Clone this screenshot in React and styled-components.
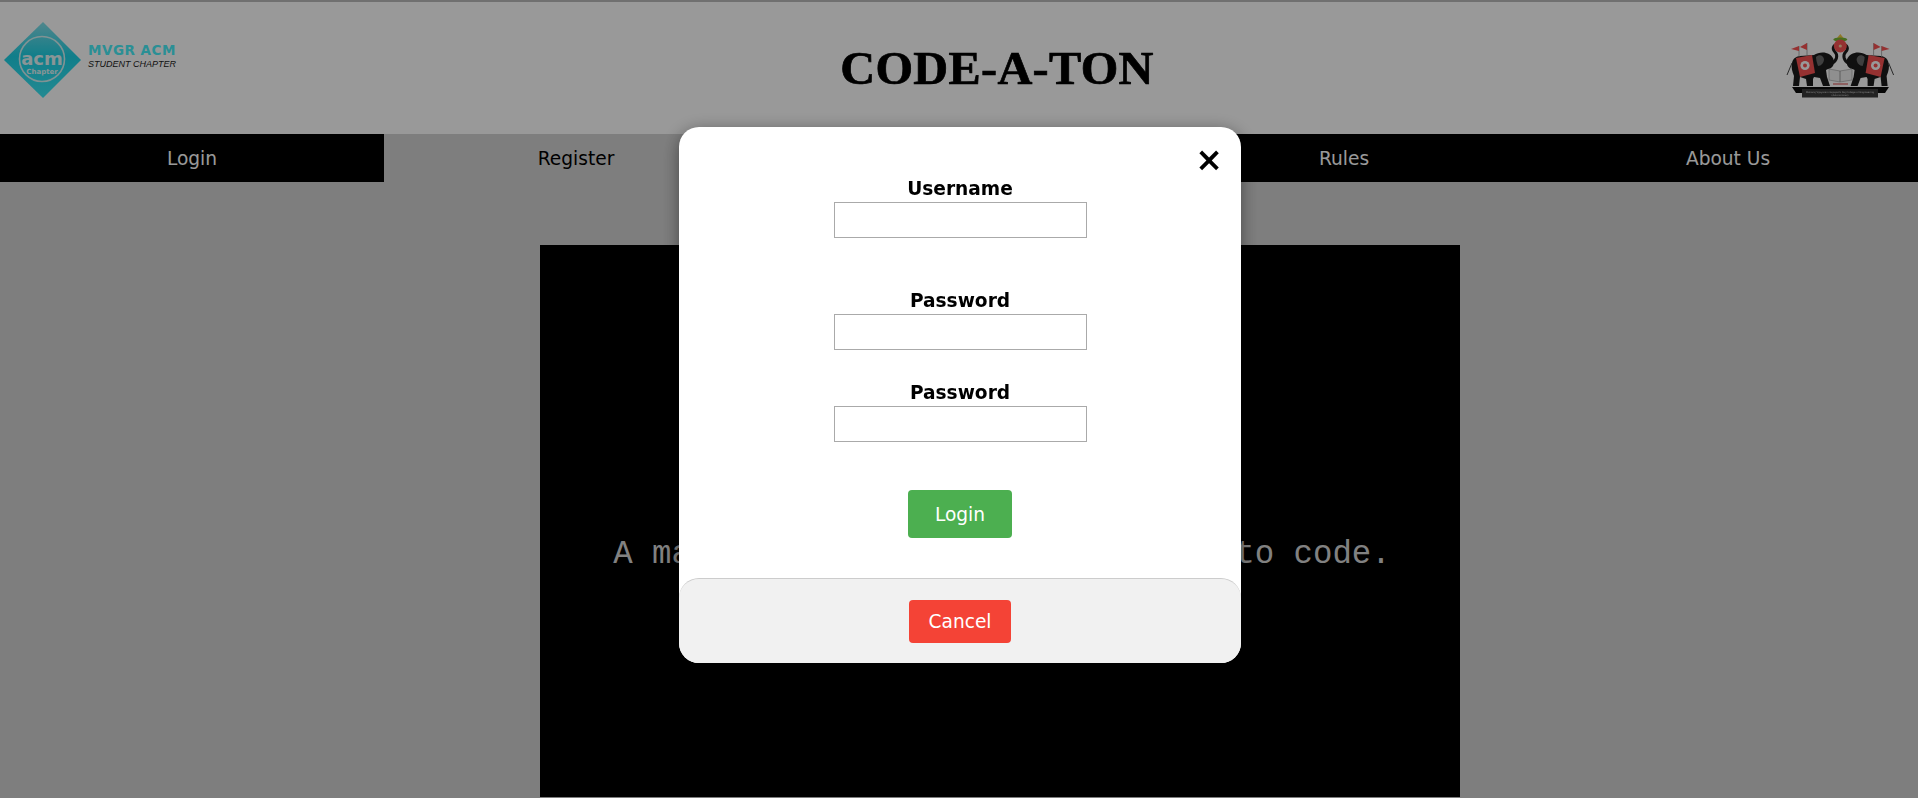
import React from "react";
import styled, { createGlobalStyle } from "styled-components";

const GlobalStyle = createGlobalStyle`
  html, body {
    margin: 0;
    padding: 0;
    height: 100%;
    overflow: hidden;
    background: lightgray;
    font-family: "DejaVu Sans", Verdana, sans-serif;
  }
`;

const Page = styled.div`
  height: 798px;
  display: flex;
  flex-direction: column;
  overflow: hidden;
  background: lightgray;
`;

const Header = styled.header`
  height: 132px;
  flex: none;
  display: grid;
  grid-template-columns: 208px 1fr 132px;
  border-top: 2px solid #bbb;
  background: #fff;
`;

const LeftLogo = styled.div`
  display: flex;
  align-items: flex-start;
  padding: 19px 0 0 4px;
  gap: 6px;
`;

const LogoText = styled.div`
  display: flex;
  flex-direction: column;
  padding-top: 22px;
`;

const LogoName = styled.span`
  font: bold 13.5px/14px "DejaVu Sans", sans-serif;
  letter-spacing: 0.5px;
  color: #46eef8;
  white-space: nowrap;
`;

const LogoSub = styled.span`
  font: italic 9px/14px "Liberation Sans", sans-serif;
  color: #222;
  white-space: nowrap;
`;

const Title = styled.h1`
  margin: 0;
  align-self: center;
  text-align: center;
  font: bold 46px "Liberation Serif", serif;
  letter-spacing: 0.3px;
  -webkit-text-stroke: 0.7px #000;
  transform: scaleX(1.05);
  color: #000;
`;

const RightLogo = styled.div`
  padding-top: 31px;
`;

const Nav = styled.nav`
  height: 48px;
  flex: none;
  display: grid;
  grid-template-columns: repeat(5, 384px);
  background: #000;
`;

const NavItem = styled.a`
  display: flex;
  align-items: center;
  justify-content: center;
  font-size: 18.6px;
  color: ${(p) => (p.$active ? "#000" : "#fff")};
  background: ${(p) => (p.$active ? "lightgray" : "#000")};
`;

const Main = styled.main`
  flex: 1;
  display: flex;
  padding: 63px 0 1px 540px;
`;

const Stage = styled.section`
  width: 920px;
  display: flex;
  align-items: center;
  justify-content: center;
  padding: 67px 0 0 4px;
  box-sizing: border-box;
  background: #000;
`;

const Tagline = styled.p`
  margin: 0;
  font: 32.4px "Liberation Mono", monospace;
  color: #d8d8d8;
  white-space: nowrap;
`;

const Overlay = styled.div`
  position: fixed;
  inset: 0;
  background: rgba(0, 0, 0, 0.4);
`;

const Modal = styled.div`
  position: absolute;
  left: 679px;
  top: 127px;
  width: 562px;
  height: 536px;
  display: flex;
  flex-direction: column;
  border-radius: 20px;
  background: #fff;
  box-shadow: 0 4px 18px rgba(0, 0, 0, 0.45);
`;

const Close = styled.span`
  position: absolute;
  top: 8px;
  right: 18px;
  font: bold 33px/50px "DejaVu Sans", sans-serif;
  color: #000;
`;

const Form = styled.form`
  flex: 1;
  display: flex;
  flex-direction: column;
  align-items: center;
  padding-top: 49px;
`;

const Field = styled.div`
  display: flex;
  flex-direction: column;
  align-items: center;
  margin-bottom: ${(p) => p.$gap}px;
`;

const Label = styled.label`
  font: bold 18.6px/26px "DejaVu Sans", sans-serif;
  color: #000;
`;

const Input = styled.input`
  box-sizing: border-box;
  width: 253px;
  height: 36px;
  border: 1px solid #aaa;
  padding: 0 8px;
  background: #fff;
`;

const Button = styled.button`
  box-sizing: border-box;
  border: none;
  border-radius: 4px;
  color: #fff;
  font: 18.6px "DejaVu Sans", sans-serif;
  background: ${(p) => p.$color};
  width: ${(p) => p.$w}px;
  height: ${(p) => p.$h}px;
`;

const Footer = styled.div`
  box-sizing: border-box;
  height: 85px;
  flex: none;
  display: flex;
  align-items: center;
  justify-content: center;
  border-top: 1px solid #ccc;
  border-radius: 20px;
  background: #f1f1f1;
`;

function AcmLogo() {
  return (
    <svg width="78" height="78" viewBox="0 0 78 78">
      <defs>
        <linearGradient id="acmFill" x1="0" y1="0" x2="0" y2="1">
          <stop offset="0" stopColor="#86e0ea" />
          <stop offset="0.45" stopColor="#1cd2e6" />
          <stop offset="1" stopColor="#3ce6f4" />
        </linearGradient>
      </defs>
      <polygon points="39,1 77,39 39,77 0,39" fill="url(#acmFill)" />
      <circle cx="38" cy="38" r="22.5" fill="none" stroke="#d6f4f6" strokeWidth="1.6" />
      <text x="38" y="44" textAnchor="middle" fontFamily="DejaVu Sans, sans-serif" fontWeight="bold" fontSize="18" fill="#e4f8fa">acm</text>
      <text x="38" y="53" textAnchor="middle" fontFamily="DejaVu Sans, sans-serif" fontWeight="bold" fontSize="7" fill="#e4f8fa">Chapter</text>
    </svg>
  );
}

function Elephant() {
  return (
    <g>
      <path d="M6 30 C7 25 11 23 14 23 L28 22 C31 20 36 19 40 20 C45 21 48 25 48 29 C48 33 45 36 42 36 L40 37 L41 44 L44 53 L37 53 L34 45 L28 44 L27 46 L27 53 L21 53 L20 46 L14 44 L13 53 L7 53 L8 43 C6 38 5 34 6 30 Z" fill="#1c1c1c" />
      <path d="M46 30 C51 28 52 22 49 19 C46 16 47 12 51 12" fill="none" stroke="#1c1c1c" strokeWidth="3" strokeLinecap="round" />
      <path d="M6 30 L1 42" stroke="#444" strokeWidth="1" />
      <path d="M10 25 L26 22 L29 40 L14 44 Z" fill="#f95252" />
      <circle cx="19" cy="32.5" r="4.6" fill="#fff" />
      <circle cx="19" cy="32.5" r="2" fill="#f95252" />
      <path d="M30 24 C33 21 37 22 38 26 C38 30 35 33 32 33 C31 30 30 27 30 24 Z" fill="#6a6a6a" />
      <path d="M13 24 L13 13 M21 22 L21 10" stroke="#999" strokeWidth="0.8" />
      <polygon points="13,13 13,18 5,16" fill="#f95252" />
      <polygon points="21,10 21,17 14,14" fill="#f95252" />
    </g>
  );
}

function CollegeCrest() {
  return (
    <svg width="110" height="68" viewBox="0 0 110 68">
      <defs>
        <filter id="crestBlur">
          <feGaussianBlur stdDeviation="0.3" />
        </filter>
      </defs>
      <g filter="url(#crestBlur)">
        <Elephant />
        <g transform="translate(108.6 0) scale(-1 1)">
          <Elephant />
        </g>
        <polygon points="54.3,1 51,5 57.6,5" fill="#f0c840" />
        <ellipse cx="54.3" cy="6.5" rx="7" ry="2" fill="#78b834" />
        <circle cx="54.3" cy="13" r="6.5" fill="#f95252" />
        <circle cx="54.3" cy="13" r="1.6" fill="#f5d0a0" />
        <path d="M43 36 L54 38 L66 36 L66 47 L54 49 L43 47 Z" fill="#eee" stroke="#999" strokeWidth="0.6" />
        <path d="M54 38 V49" stroke="#888" strokeWidth="0.8" />
        <path d="M47 51 H62" stroke="#e06060" strokeWidth="1.2" />
        <path d="M6 54 H103 L99 60 H10 Z" fill="#111" />
        <rect x="16" y="56" width="76" height="8.5" fill="#3a3a3a" />
        <text x="54" y="59.6" textAnchor="middle" fontFamily="DejaVu Sans, sans-serif" fontSize="2.4" textLength="68" fill="#ddd">Maharaj Vijayaram Gajapathi Raj College of Engineering</text>
        <text x="54" y="63" textAnchor="middle" fontFamily="DejaVu Sans, sans-serif" fontSize="2.4" fill="#ddd">(Autonomous)</text>
      </g>
    </svg>
  );
}

const navItems = ["Login", "Register", "Home", "Rules", "About Us"];

export default function App() {
  return (
    <Page>
      <GlobalStyle />
      <Header>
        <LeftLogo>
          <AcmLogo />
          <LogoText>
            <LogoName>MVGR ACM</LogoName>
            <LogoSub>STUDENT CHAPTER</LogoSub>
          </LogoText>
        </LeftLogo>
        <Title>CODE-A-TON</Title>
        <RightLogo>
          <CollegeCrest />
        </RightLogo>
      </Header>
      <Nav>
        {navItems.map((item) => (
          <NavItem key={item} $active={item === "Register"}>
            {item}
          </NavItem>
        ))}
      </Nav>
      <Main>
        <Stage>
          <Tagline>A marathon for anyone who loves to code.</Tagline>
        </Stage>
      </Main>
      <Overlay>
        <Modal>
          <Close>×</Close>
          <Form>
            <Field $gap={50}>
              <Label>Username</Label>
              <Input type="text" />
            </Field>
            <Field $gap={30}>
              <Label>Password</Label>
              <Input type="password" />
            </Field>
            <Field $gap={48}>
              <Label>Password</Label>
              <Input type="password" />
            </Field>
            <Button type="button" $color="#4caf50" $w={104} $h={48}>
              Login
            </Button>
          </Form>
          <Footer>
            <Button type="button" $color="#f44336" $w={102} $h={43}>
              Cancel
            </Button>
          </Footer>
        </Modal>
      </Overlay>
    </Page>
  );
}
